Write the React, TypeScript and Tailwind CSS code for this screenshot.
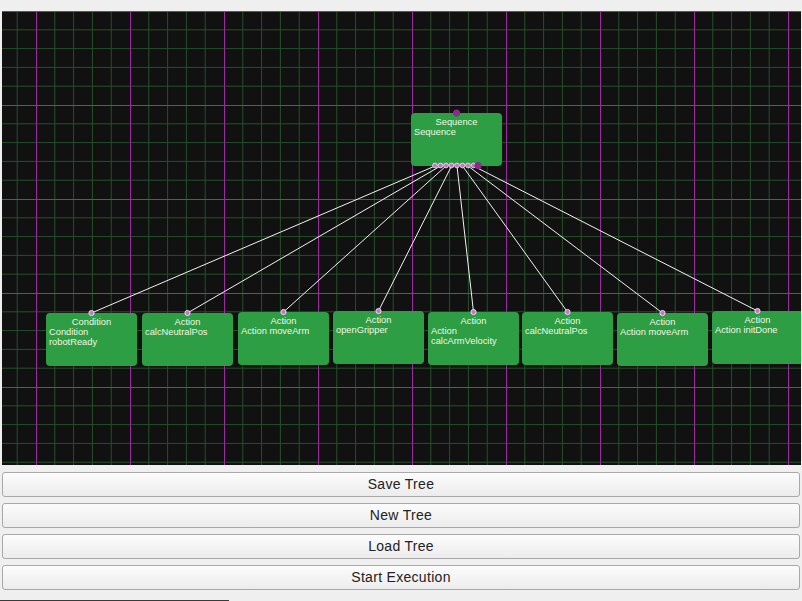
import React from "react";

type TreeNode = {
  x: number;
  y: number;
  title: string;
  lines: string[];
};

const parent: TreeNode = { x: 411, y: 113, title: "Sequence", lines: ["Sequence"] };

const children: TreeNode[] = [
  { x: 46, y: 313, title: "Condition", lines: ["Condition", "robotReady"] },
  { x: 142, y: 313, title: "Action", lines: ["calcNeutralPos"] },
  { x: 238, y: 312, title: "Action", lines: ["Action moveArm"] },
  { x: 333, y: 311, title: "Action", lines: ["openGripper"] },
  { x: 428, y: 312, title: "Action", lines: ["Action", "calcArmVelocity"] },
  { x: 522, y: 312, title: "Action", lines: ["calcNeutralPos"] },
  { x: 617, y: 313, title: "Action", lines: ["Action moveArm"] },
  { x: 712, y: 311, title: "Action", lines: ["Action initDone"] },
];

// canvas origin on the page
const OX = 2;
const OY = 11;
const CW = 799;
const CH = 454;

function Grid() {
  const minor = 94 / 5;
  const vx: number[] = [];
  for (let k = -5; 36 + k * minor < OX + CW; k++) vx.push(k);
  const hy: number[] = [];
  for (let k = 0; 11 + k * minor < OY + CH; k++) hy.push(k);

  return (
    <svg className="absolute inset-0" width={CW} height={CH}>
      <g transform={`translate(${-OX},${-OY})`}>
        {vx.filter((k) => k % 5 !== 0).map((k) => (
          <line key={"v" + k} x1={36 + k * minor} y1={0} x2={36 + k * minor} y2={OY + CH} stroke="#25502a" strokeWidth={1} />
        ))}
        {hy.filter((k) => k % 5 !== 0).map((k) => (
          <line key={"h" + k} x1={0} y1={11 + k * minor} x2={OX + CW} y2={11 + k * minor} stroke="#25502a" strokeWidth={1} />
        ))}
        {vx.filter((k) => k % 5 === 0).map((k) => (
          <line key={"V" + k} x1={36 + k * minor + 0.5} y1={0} x2={36 + k * minor + 0.5} y2={OY + CH} stroke="#982e9c" strokeWidth={1} />
        ))}
        {hy.filter((k) => k % 5 === 0).map((k) => (
          <line key={"H" + k} x1={0} y1={11 + k * minor + 0.5} x2={OX + CW} y2={11 + k * minor + 0.5} stroke="#982e9c" strokeWidth={1} />
        ))}
      </g>
    </svg>
  );
}

function NodeBox({ node }: { node: TreeNode }) {
  return (
    <div
      className="absolute flex h-[53px] w-[91px] flex-col rounded-[4px] bg-[#2e9e44] px-[3px] pt-[4px] text-[9.3px] leading-[10px] whitespace-nowrap text-[#f2f7e2]"
      style={{ left: node.x - OX, top: node.y - OY, fontFamily: '"Liberation Sans", Arial, sans-serif' }}
    >
      <div className="text-center">{node.title}</div>
      {node.lines.map((l, i) => (
        <div key={i}>{l}</div>
      ))}
    </div>
  );
}

function Edges() {
  const ports = children.map((_, i) => 435 + i * 5.5);
  return (
    <svg className="absolute inset-0" width={CW} height={CH}>
      <g transform={`translate(${-OX},${-OY})`}>
        {children.map((c, i) => (
          <line key={i} x1={ports[i]} y1={166} x2={c.x + 45.5} y2={c.y} stroke="#f2f2f2" strokeWidth={1} />
        ))}
      </g>
    </svg>
  );
}

function Ports() {
  const ports = children.map((_, i) => 435 + i * 5.5);
  return (
    <svg className="absolute inset-0" width={CW} height={CH}>
      <g transform={`translate(${-OX},${-OY})`}>
        <circle cx={456.5} cy={113} r={3.5} fill="#8e2a8e" />
        {ports.map((x, i) => (
          <circle key={i} cx={x} cy={165.5} r={2.4} fill="#c774c7" stroke="#f4e4f4" strokeWidth={0.8} />
        ))}
        <circle cx={478} cy={165.5} r={3.5} fill="#8e2a8e" />
        {children.map((c, i) => (
          <circle key={"c" + i} cx={c.x + 45.5} cy={c.y} r={2.6} fill="#c774c7" stroke="#f4e4f4" strokeWidth={0.9} />
        ))}
      </g>
    </svg>
  );
}

function Button({ label }: { label: string }) {
  return (
    <button
      className="h-[25px] w-full rounded-[3px] border border-[#a9a9a9] bg-gradient-to-b from-[#fcfcfc] to-[#ececec] text-[14px] tracking-[0.3px] text-[#222222]"
      style={{ fontFamily: '"Liberation Sans", Arial, sans-serif' }}
    >
      {label}
    </button>
  );
}

export default function App() {
  return (
    <div className="flex h-[601px] w-[802px] flex-col overflow-hidden bg-[#efefef]">
      <div className="h-[11px]" />
      <div className="relative ml-[2px] h-[454px] w-[799px] overflow-hidden bg-[#111111]">
        <Grid />
        <Edges />
        <NodeBox node={parent} />
        {children.map((c, i) => (
          <NodeBox key={i} node={c} />
        ))}
        <Ports />
      </div>
      <div className="flex flex-col gap-[6px] px-[2px] pt-[7px]">
        <Button label="Save Tree" />
        <Button label="New Tree" />
        <Button label="Load Tree" />
        <Button label="Start Execution" />
      </div>
      <div className="mt-auto h-[1px] w-[229px] bg-[#3a3a3a]" />
    </div>
  );
}
